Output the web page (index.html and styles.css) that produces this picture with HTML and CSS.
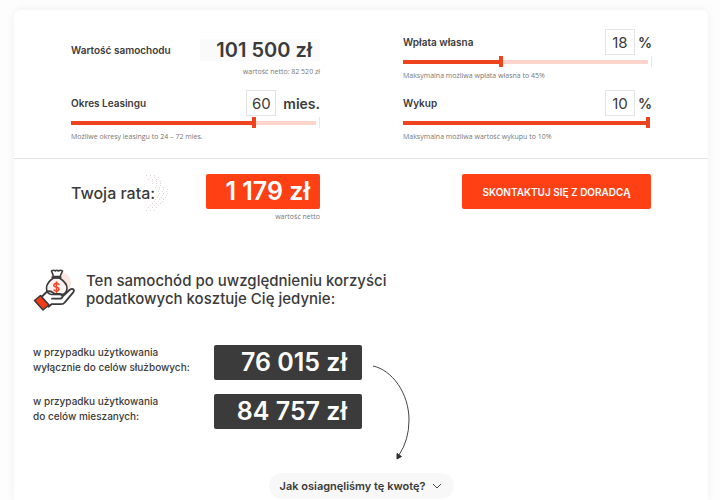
FILE: index.html
```html
<!DOCTYPE html>
<html lang="pl">
<head>
    <meta charset="UTF-8">
    <meta name="viewport" content="width=device-width, initial-scale=1">
    <title>Kalkulator leasingu</title>
    <link rel="stylesheet" href="styles.css">
</head>
<body>
    <main class="card">
        <!-- Parametry leasingu -->
        <form class="calculator">
            <div class="field field-price">
                <div class="field-head">
                    <span class="label">Wartość samochodu</span>
                    <strong class="price">101 500 zł</strong>
                </div>
                <p class="note note-right">wartość netto: 82 520 zł</p>
            </div>

            <div class="field">
                <div class="field-head">
                    <label class="label" for="payment">Wpłata własna</label>
                    <input class="number" id="payment" type="text" value="18">
                    <span class="unit">%</span>
                </div>
                <div class="slider">
                    <input type="range" class="range" min="0" max="45" value="18" aria-label="Wpłata własna" style="--fill: 40%">
                </div>
                <p class="note">Maksymalna możliwa wpłata własna to 45%</p>
            </div>

            <div class="field">
                <div class="field-head">
                    <label class="label" for="period">Okres Leasingu</label>
                    <input class="number" id="period" type="text" value="60">
                    <span class="unit unit-months">mies.</span>
                </div>
                <div class="slider">
                    <input type="range" class="range" min="24" max="72" value="60" aria-label="Okres Leasingu" style="--fill: 75%">
                </div>
                <p class="note">Możliwe okresy leasingu to 24 – 72 mies.</p>
            </div>

            <div class="field">
                <div class="field-head">
                    <label class="label" for="buyout">Wykup</label>
                    <input class="number" id="buyout" type="text" value="10">
                    <span class="unit">%</span>
                </div>
                <div class="slider slider-full">
                    <input type="range" class="range" min="0" max="10" value="10" aria-label="Wykup" style="--fill: 100%">
                </div>
                <p class="note">Maksymalna możliwa wartość wykupu to 10%</p>
            </div>
        </form>

        <!-- Rata -->
        <section class="rate">
            <div class="rate-main">
                <h2 class="rate-title">Twoja rata:
                    <svg class="dots" width="28" height="38" viewBox="0 0 28 38" aria-hidden="true">
                        <g fill="none" stroke="#d6d6d6" stroke-width="1" stroke-dasharray="1 3">
                            <path d="M4 1.500h9M6 5.500h9M10 9.500h9M13 13.500h10M16 17.500h12M16 21.500h9M13 25.500h9M10 29.500h9M6 33.500h9M4 36.500h9"/>
                        </g>
                        <g fill="none" stroke="#e8dcd9" stroke-width="1" stroke-dasharray="1 3">
                            <path d="M8 3.500h9M10 7.500h9M14 11.500h8M17 15.500h9M17 19.500h9M15 23.500h9M12 27.500h9M8 31.500h9"/>
                        </g>
                    </svg>
                </h2>
                <div class="rate-value">
                    <strong class="amount amount-red">1 179 zł</strong>
                    <p class="note note-right">wartość netto</p>
                </div>
            </div>
            <button type="button" class="contact">SKONTAKTUJ SIĘ Z DORADCĄ</button>
        </section>

        <!-- Koszt po korzyściach podatkowych -->
        <section class="summary">
            <header class="summary-head">
                <svg width="42" height="42" viewBox="0 0 42 42" aria-hidden="true">
                    <circle cx="27" cy="14" r="11" fill="#fde6e2"/>
                    <path d="M20.500 9C16 12 13.500 15 13.500 19q0 6 5 6.500h10q5.500-.5 5.500-6.500c0-4-3-7-7.500-10z" fill="#fdf3f1" stroke="#3b3b3b" stroke-width="1.600"/>
                    <path d="M20.500 7.500l-2-5.500q2.500-1.500 4 0 1-1.500 3 0 2-1.500 4 0l-2.500 5.500z" fill="#fff" stroke="#3b3b3b" stroke-width="1.600" stroke-linejoin="round"/>
                    <path d="M19.500 8.300h8" stroke="#3b3b3b" stroke-width="2.200" stroke-linecap="round"/>
                    <path d="M26 15.500q-2.500-2-4.500-.5c-2 2 .5 3 2 3.200 2 .3 3.500 1.800 1.500 3.300q-2 1.200-4-.5M23.500 13v10.500" fill="none" stroke="#f04a28" stroke-width="1.600" stroke-linecap="round"/>
                    <path d="M8.500 28l4.500-4.500q2.500-2 5.500-.8l3.500 2.300h4.500q3 .3 3 2.500t-3 2.200h-7.500M29.500 27.500l7-6.500q2.500-1.800 4-.5 1 1.200-.5 3.200l-8 9.500q-1.500 2-4 2H18.500l-3 2.500" fill="none" stroke="#3b3b3b" stroke-width="1.800" stroke-linecap="round" stroke-linejoin="round"/>
                    <path d="M1.500 31.500l6-5 8.500 9.500-6 5z" fill="#f23b16" stroke="#3b3b3b" stroke-width="1.600" stroke-linejoin="round"/>
                </svg>
                <h2 class="summary-title">Ten samochód po uwzględnieniu korzyści<br>podatkowych kosztuje Cię jedynie:</h2>
            </header>

            <div class="costs">
                <dl class="cost-list">
                    <div class="cost">
                        <dt>w przypadku użytkowania<br>wyłącznie do celów służbowych:</dt>
                        <dd class="amount">76 015 zł</dd>
                    </div>
                    <div class="cost">
                        <dt>w przypadku użytkowania<br>do celów mieszanych:</dt>
                        <dd class="amount">84 757 zł</dd>
                    </div>
                </dl>
                <svg class="arrow" width="40" height="96" viewBox="0 0 40 96" aria-hidden="true">
                    <path d="M1 1C20 5 37 28 37 55Q37 75 27 90" fill="none" stroke="#444" stroke-width="1"/>
                    <path d="M25 88.500l4.500 3-4.500 2.500z" fill="#333" stroke="#333"/>
                </svg>
            </div>

            <button type="button" class="details">
                Jak osiagnęliśmy tę kwotę?
                <svg width="10" height="6" viewBox="0 0 10 6" aria-hidden="true">
                    <path d="M1 1l4 4 4-4" fill="none" stroke="#444" stroke-width="1"/>
                </svg>
            </button>
        </section>
    </main>
</body>
</html>
```
FILE: styles.css
```css
* {
    box-sizing: border-box;
}

body {
    margin: 0;
    padding: 10px 12px 0 14px;
    background-color: #fdfdfd;
    color: #3b3b3b;
    font-family: Inter, "Open Sans", sans-serif;
}

h2, p, dl, dd {
    margin: 0;
}

button, input {
    font-family: inherit;
    color: inherit;
}

.card {
    min-height: calc(100vh - 10px);
    background-color: #fff;
    border-radius: 6px 6px 0 0;
    box-shadow: 0 0 10px rgba(0, 0, 0, 0.06);
}

/* Parametry */
.calculator {
    display: grid;
    grid-template-columns: 1fr 1fr;
    gap: 9px 83px;
    padding: 19px 56px 16px 57px;
    border-bottom: 1px solid #e2e2e2;
}

.field-head {
    display: flex;
    align-items: center;
    height: 26px;
}

.field-price {
    padding-top: 8px;
}

.field-price .note {
    margin-top: 3px;
}

.label {
    flex: 1;
    font-size: 10px;
    font-weight: 600;
    white-space: nowrap;
}

.price {
    width: 120px;
    padding-right: 8px;
    background-color: #fafafa;
    font-size: 20px;
    font-weight: 600;
    line-height: 22px;
    text-align: right;
    white-space: nowrap;
}

.number {
    width: 30px;
    height: 26px;
    padding: 0;
    border: 1px solid #e3e3e3;
    background-color: #fff;
    font-size: 15px;
    text-align: center;
}

.unit {
    margin-left: 3px;
    font-size: 14px;
    font-weight: 600;
}

.unit-months {
    margin-left: 7px;
}

/* Suwak z kreską na końcu skali */
.slider {
    display: flex;
    gap: 3px;
    height: 11px;
    margin: 1px 0 3px;
}

.slider::after {
    content: "";
    width: 1px;
    background-color: #e8e8e8;
}

.slider-full {
    gap: 1px;
}

.slider-full::after {
    background-color: transparent;
}

.range {
    flex: 1;
    min-width: 0;
    height: 11px;
    margin: 0;
    appearance: none;
    background: none;
}

.range::-webkit-slider-runnable-track {
    height: 4px;
    background: linear-gradient(to right, #ef431d var(--fill), #ffd5cc var(--fill));
}

.range::-webkit-slider-thumb {
    appearance: none;
    width: 4px;
    height: 11px;
    margin-top: -4px;
    background-color: #ef431d;
}

.note {
    color: #777;
    font-family: "Open Sans", sans-serif;
    font-size: 7px;
    line-height: 11px;
}

.note-right {
    text-align: right;
}

/* Rata */
.rate {
    display: grid;
    grid-template-columns: 1fr 1fr;
    gap: 82px;
    align-items: start;
    padding: 15px 57px 0;
}

.rate-main {
    display: flex;
    justify-content: space-between;
}

.rate-title {
    position: relative;
    isolation: isolate;
    font-size: 16px;
    font-weight: 500;
    line-height: 38px;
    white-space: nowrap;
}

.dots {
    position: absolute;
    top: 0;
    right: -15px;
    z-index: -1;
}

.amount {
    display: block;
    border-radius: 2px;
    background-color: #3b3b3b;
    color: #fff;
    font-size: 25px;
    font-weight: 600;
    line-height: 35px;
    text-align: right;
    white-space: nowrap;
}

.amount-red {
    width: 114px;
    margin-bottom: 2px;
    padding-right: 10px;
    background-color: #ff4015;
}

.contact {
    justify-self: end;
    width: 189px;
    height: 35px;
    padding: 0;
    border: 0;
    border-radius: 2px;
    background-color: #ff4015;
    color: #fff;
    font-size: 10px;
    font-weight: 600;
    white-space: nowrap;
    cursor: pointer;
}

/* Podsumowanie */
.summary {
    padding: 47px 19px 1px;
}

.summary-head {
    display: flex;
    align-items: center;
    gap: 11px;
}

.summary-title {
    font-size: 15px;
    font-weight: 500;
    line-height: 18px;
}

.costs {
    display: flex;
    align-items: flex-start;
    gap: 10px;
    margin-top: 34px;
}

.cost-list {
    display: grid;
    gap: 14px;
}

.cost {
    display: flex;
    align-items: flex-start;
}

.cost dt {
    width: 181px;
    font-size: 10px;
    font-weight: 500;
    line-height: 15px;
    white-space: nowrap;
}

.cost dd {
    width: 148px;
    padding-right: 15px;
}

.arrow {
    margin-top: 20px;
}

.details {
    display: flex;
    align-items: center;
    justify-content: center;
    gap: 7px;
    width: 185px;
    height: 26px;
    margin: 12px auto 0;
    padding: 0;
    border: 0;
    border-radius: 13px;
    background-color: #f8f8f8;
    font-size: 11px;
    font-weight: 600;
    white-space: nowrap;
    cursor: pointer;
}
```
